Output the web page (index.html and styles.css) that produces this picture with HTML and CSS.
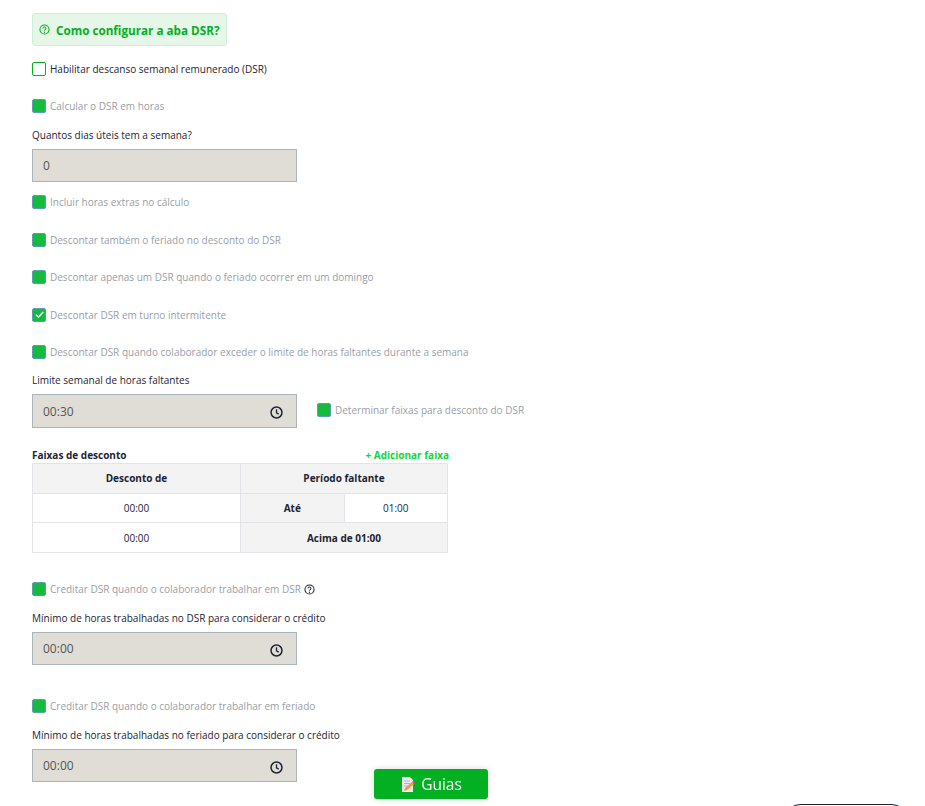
FILE: index.html
```html
<!DOCTYPE html>
<html lang="en">
<head>
<meta charset="UTF-8">
<meta name="viewport" content="width=device-width, initial-scale=1.0">
<title>DSR</title>
<link rel="stylesheet" href="styles.css">
</head>
<body>
<div class="page">
    <div class="help-banner">
        <svg class="help-icon" width="11" height="11" viewBox="0 0 12 12"><circle cx="6" cy="6" r="5" fill="none" stroke="currentColor" stroke-width="1.1"/><path d="M4.4 4.8a1.6 1.6 0 1 1 2.5 1.3c-.6.4-.9.6-.9 1.2" fill="none" stroke="currentColor" stroke-width="1.1"/><circle cx="6" cy="9" r=".7" fill="currentColor"/></svg>
        <span>Como configurar a aba DSR?</span>
    </div>

    <label class="check-row enabled first"><span class="box empty"></span>Habilitar descanso semanal remunerado (DSR)</label>
    <label class="check-row second"><span class="box"></span>Calcular o DSR em horas</label>

    <div class="field-label">Quantos dias úteis tem a semana?</div>
    <div class="input-box short">0</div>

    <label class="check-row after-input"><span class="box"></span>Incluir horas extras no cálculo</label>
    <label class="check-row"><span class="box"></span>Descontar também o feriado no desconto do DSR</label>
    <label class="check-row"><span class="box"></span>Descontar apenas um DSR quando o feriado ocorrer em um domingo</label>
    <label class="check-row"><span class="box"><svg width="13" height="13" viewBox="0 0 13 13"><path d="M3 6.8l2.4 2.4L10.2 4" fill="none" stroke="#fff" stroke-width="1.5"/></svg></span>Descontar DSR em turno intermitente</label>
    <label class="check-row"><span class="box"></span>Descontar DSR quando colaborador exceder o limite de horas faltantes durante a semana</label>

    <div class="field-label tight">Limite semanal de horas faltantes</div>
    <div class="limit-row">
        <div class="input-box tall">00:30
            <svg class="clock" width="13" height="13" viewBox="0 0 14 14"><circle cx="7" cy="7" r="5.9" fill="none" stroke="#1d2433" stroke-width="1.6"/><path d="M7 3.6V7.3l2.4 1.5" fill="none" stroke="#1d2433" stroke-width="1.4"/></svg>
        </div>
        <label class="check-row inline"><span class="box"></span>Determinar faixas para desconto do DSR</label>
    </div>

    <div class="table-head">
        <span>Faixas de desconto</span>
        <span class="add-link">+ Adicionar faixa</span>
    </div>
    <table class="ranges">
        <tr class="gray">
            <th class="col-from">Desconto de</th>
            <th colspan="2">Período faltante</th>
        </tr>
        <tr>
            <td>00:00</td>
            <th class="gray col-until">Até</th>
            <td>01:00</td>
        </tr>
        <tr>
            <td>00:00</td>
            <th class="gray" colspan="2">Acima de 01:00</th>
        </tr>
    </table>

    <label class="check-row after-table"><span class="box"></span>Creditar DSR quando o colaborador trabalhar em DSR
        <svg class="tip" width="11" height="11" viewBox="0 0 12 12"><circle cx="6" cy="6" r="5" fill="none" stroke="#1d2433" stroke-width="1.1"/><path d="M4.4 4.8a1.6 1.6 0 1 1 2.5 1.3c-.6.4-.9.6-.9 1.2" fill="none" stroke="#1d2433" stroke-width="1.1"/><circle cx="6" cy="9" r=".7" fill="#1d2433"/></svg>
    </label>
    <div class="field-label">Mínimo de horas trabalhadas no DSR para considerar o crédito</div>
    <div class="input-box short">00:00
        <svg class="clock" width="13" height="13" viewBox="0 0 14 14"><circle cx="7" cy="7" r="5.9" fill="none" stroke="#1d2433" stroke-width="1.6"/><path d="M7 3.6V7.3l2.4 1.5" fill="none" stroke="#1d2433" stroke-width="1.4"/></svg>
    </div>

    <label class="check-row after-credit"><span class="box"></span>Creditar DSR quando o colaborador trabalhar em feriado</label>
    <div class="field-label">Mínimo de horas trabalhadas no feriado para considerar o crédito</div>
    <div class="input-box short">00:00
        <svg class="clock" width="13" height="13" viewBox="0 0 14 14"><circle cx="7" cy="7" r="5.9" fill="none" stroke="#1d2433" stroke-width="1.6"/><path d="M7 3.6V7.3l2.4 1.5" fill="none" stroke="#1d2433" stroke-width="1.4"/></svg>
    </div>
</div>

<button class="guides-btn">
    <svg width="16" height="17" viewBox="0 0 16 17"><path d="M2 1h8l3 3v12H2z" fill="#eeeaf2"/><path d="M4 5h6M4 7.5h6M4 10h4" stroke="#b7aec4" stroke-width="1"/><path d="M4 15l1-3 7-6 2 2-7 6z" fill="#f39a34"/><path d="M12 6l1.2-1.2 2 2L14 8z" fill="#e8487f"/></svg>
    Guias
</button>
<div class="cut-btn"></div>
</body>
</html>
```

FILE: styles.css
```css
html, body {
    height: 806px;
    overflow: hidden;
}
body {
    margin: 0;
    background-color: white;
    font-family: "Open Sans", sans-serif;
    font-size: 10px;
    color: #1d2433;
}
.page {
    display: flex;
    flex-direction: column;
    align-items: flex-start;
    padding: 13px 0 0 32px;
}
.help-banner {
    display: flex;
    align-items: center;
    gap: 6px;
    width: 195px;
    height: 33px;
    box-sizing: border-box;
    padding-left: 6px;
    background-color: #e6f6e9;
    border: 1px solid #cfeed6;
    border-radius: 3px;
    color: #03b021;
    font-size: 11.7px;
    font-weight: 700;
}
.check-row {
    display: flex;
    align-items: center;
    gap: 4px;
    height: 14px;
    margin-top: 23.5px;
    color: #98a0a8;
    white-space: nowrap;
}
.check-row.enabled {
    color: #1d2433;
}
.check-row.first {
    margin-top: 16px;
}
.check-row.second {
    margin-top: 23px;
}
.check-row.after-input {
    margin-top: 13px;
}
.check-row.after-table {
    margin-top: 29px;
}
.check-row.after-credit {
    margin-top: 34px;
}
.check-row.inline {
    margin-top: 0;
    margin-bottom: 2px;
}
.box {
    display: block;
    width: 12px;
    height: 12px;
    flex-shrink: 0;
    background-color: #15bb3c;
    border: 1px solid #5c9fb0;
    border-radius: 2px;
}
.box svg {
    display: block;
    margin: -0.5px;
}
.box.empty {
    background-color: white;
    border-color: #03b021;
}
.field-label {
    margin-top: 15px;
    margin-bottom: 7px;
    line-height: 14px;
    white-space: nowrap;
}
.field-label.tight {
    margin-top: 14px;
}
.input-box {
    display: flex;
    align-items: center;
    justify-content: space-between;
    width: 265px;
    box-sizing: border-box;
    padding: 0 13px 0 10px;
    background-color: #e0ddd7;
    border: 1px solid #aab4bc;
    color: #555;
    font-size: 12px;
}
.input-box.short {
    height: 33px;
}
.input-box.tall {
    height: 34px;
}
.clock {
    margin-top: 3px;
}
.limit-row {
    display: flex;
    align-items: center;
    gap: 20px;
}
.table-head {
    display: flex;
    justify-content: space-between;
    width: 417px;
    margin-top: 21px;
    margin-bottom: 1px;
    line-height: 13px;
    font-weight: 700;
}
.add-link {
    color: #0fd63a;
}
.ranges {
    width: 416px;
    height: 90px;
    border-collapse: collapse;
    table-layout: fixed;
    font-size: 10px;
}
.ranges td, .ranges th {
    border: 1px solid #e2e4e8;
    padding: 0;
    text-align: center;
}
.ranges .gray, .ranges .gray th {
    background-color: #f3f3f3;
}
.col-from {
    width: 207px;
}
.col-until {
    width: 103px;
}
.tip {
    margin-left: -1px;
}
.guides-btn {
    position: fixed;
    left: 374px;
    top: 769px;
    width: 114px;
    height: 30px;
    display: flex;
    align-items: center;
    justify-content: center;
    gap: 5px;
    background-color: #03b021;
    border: none;
    border-radius: 3px;
    box-shadow: 0 0 6px rgba(0, 0, 0, 0.15);
    color: white;
    font-family: "Open Sans", sans-serif;
    font-size: 15.5px;
}
.cut-btn {
    position: fixed;
    left: 785px;
    top: 804px;
    width: 122px;
    height: 30px;
    box-sizing: border-box;
    border: 1px solid #1d2433;
    border-radius: 15px;
}
```
